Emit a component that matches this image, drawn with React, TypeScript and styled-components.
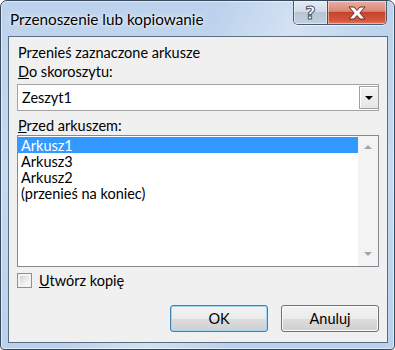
import React from 'react';
import styled, { createGlobalStyle } from 'styled-components';

const GlobalStyle = createGlobalStyle`
  html, body {
    margin: 0;
    padding: 0;
    background: #ffffff;
  }
  body {
    font-family: Lato, "Noto Sans", "Liberation Sans", sans-serif;
    font-size: 14.5px;
    color: #000;
  }
`;

const Window = styled.div`
  width: 395px;
  height: 350px;
  box-sizing: border-box;
  border: 1px solid #3a4a5d;
  border-radius: 7px 7px 4px 4px;
  padding: 0 6px 6px 7px;
  display: flex;
  flex-direction: column;
  background:
    linear-gradient(115deg, rgba(255, 255, 255, 0) 40%, rgba(255, 255, 255, 0.35) 55%, rgba(255, 255, 255, 0) 70%),
    linear-gradient(180deg, #bcd2ec 0%, #c6daf0 50%, #b9d1ec 100%);
  box-shadow: inset 0 0 0 1px rgba(255, 255, 255, 0.55);
  overflow: hidden;
`;

const TitleBar = styled.div`
  height: 35px;
  flex: none;
  display: flex;
  justify-content: space-between;
  align-items: flex-start;
`;

const Title = styled.div`
  padding: 8px 0 0 2px;
  font-size: 15.3px;
  line-height: 20px;
  color: #000;
  text-shadow: 0 0 6px rgba(255, 255, 255, 0.9), 0 0 2px rgba(255, 255, 255, 0.9);
`;

const CaptionButtons = styled.div`
  display: flex;
  margin-right: 1px;
  height: 23px;
  border: 1px solid #4a5a6e;
  border-top: none;
  border-radius: 0 0 5px 5px;
  overflow: hidden;
  box-shadow: 0 1px 0 rgba(255, 255, 255, 0.6);
`;

const CaptionButton = styled.div<{ $kind: 'help' | 'close' }>`
  width: ${p => (p.$kind === 'help' ? '33px' : '58px')};
  height: 100%;
  display: flex;
  align-items: center;
  justify-content: center;
  box-shadow: inset 0 0 0 1px rgba(255, 255, 255, 0.45);
  border-left: ${p => (p.$kind === 'close' ? '1px solid #5a4a50' : 'none')};
  background: ${p =>
    p.$kind === 'help'
      ? 'linear-gradient(180deg, #e3eaf3 0%, #d2dce8 45%, #b7c5d6 50%, #c4d0de 100%)'
      : 'linear-gradient(180deg, #eab0a3 0%, #d98672 45%, #c4432c 50%, #d5563d 85%, #e07a5f 100%)'};
`;

const HelpGlyph = styled.span`
  font-family: "DejaVu Sans", sans-serif;
  font-weight: bold;
  font-size: 18px;
  line-height: 18px;
  color: #ffffff;
  -webkit-text-stroke: 1px #4d5a6a;
`;

const Client = styled.div`
  flex: 1;
  border: 1px solid #5c6d80;
  background: #f0f0f0;
  display: flex;
  flex-direction: column;
  padding: 6px 8px 10px 8px;
`;

const Caption = styled.div<{ $gap?: number }>`
  height: 19px;
  line-height: 20px;
  padding-left: 1px;
  margin-top: ${p => p.$gap ?? 0}px;
  white-space: nowrap;
`;

const Combo = styled.div`
  margin-top: 3px;
  height: 27px;
  box-sizing: border-box;
  border: 1px solid #a3a3a3;
  background: #ffffff;
  display: flex;
  align-items: stretch;
  padding: 1px 0;
`;

const ComboText = styled.div`
  flex: 1;
  padding-left: 4px;
  line-height: 24px;
`;

const ComboButton = styled.div`
  width: 20px;
  box-sizing: border-box;
  border: 1px solid #a0a0a0;
  margin-right: -1px;
  background: linear-gradient(180deg, #f4f4f4 0%, #e6e6e6 100%);
  box-shadow: inset 1px 1px 0 #ffffff;
  display: flex;
  align-items: center;
  justify-content: center;
`;

const ListBox = styled.div`
  height: 132px;
  box-sizing: border-box;
  border: 1px solid #828790;
  background: #ffffff;
  display: flex;
`;

const Items = styled.div`
  flex: 1;
  padding-top: 1px;
`;

const Row = styled.div<{ $selected?: boolean }>`
  height: 15px;
  padding-top: 1px;
  line-height: 16px;
  padding-left: 3px;
  white-space: nowrap;
  background: ${p => (p.$selected ? '#3399ff' : 'transparent')};
  color: ${p => (p.$selected ? '#ffffff' : '#000000')};
`;

const ScrollBar = styled.div`
  width: 20px;
  background: #f3f3f3;
  display: flex;
  flex-direction: column;
  justify-content: space-between;
  align-items: center;
  padding: 9px 0 10px;
`;

const Arrow = styled.div<{ $down?: boolean }>`
  width: 0;
  height: 0;
  border-left: 4px solid transparent;
  border-right: 4px solid transparent;
  ${p => (p.$down ? 'border-top: 4px solid #a3a3a3;' : 'border-bottom: 4px solid #a3a3a3;')}
`;

const ComboArrow = styled.div`
  width: 0;
  height: 0;
  border-left: 4px solid transparent;
  border-right: 4px solid transparent;
  border-top: 4px solid #000000;
  margin-top: 1px;
`;

const CheckRow = styled.label`
  margin-top: 6px;
  height: 15px;
  display: flex;
  align-items: center;
  gap: 7px;
`;

const CheckBox = styled.span`
  width: 15px;
  height: 15px;
  box-sizing: border-box;
  border: 1px solid #8e8f8f;
  background: #f4f4f4;
  padding: 2px;
  display: block;
  &::after {
    content: '';
    display: block;
    width: 100%;
    height: 100%;
    background: linear-gradient(135deg, #cfd2d6 0%, #eeeeee 60%, #f6f6f6 100%);
  }
`;

const CheckLabel = styled.span`
  line-height: 18px;
  white-space: nowrap;
`;

const ButtonRow = styled.div`
  margin-top: auto;
  display: flex;
  justify-content: flex-end;
  gap: 13px;
`;

const Button = styled.button<{ $default?: boolean }>`
  width: 98px;
  height: 27px;
  box-sizing: border-box;
  font-family: inherit;
  font-size: 14.5px;
  color: #000;
  border-radius: 3px;
  border: 1px solid ${p => (p.$default ? '#3c7fb1' : '#707070')};
  box-shadow: inset 0 0 0 1px ${p => (p.$default ? '#a4d8f5' : '#fbfbfb')};
  background: linear-gradient(180deg, #f2f2f2 0%, #ebebeb 50%, #dddddd 51%, #cfcfcf 100%);
  padding: 0;
`;

const App: React.FC = () => {
  return (
    <>
      <GlobalStyle />
      <Window>
        <TitleBar>
          <Title>Przenoszenie lub kopiowanie</Title>
          <CaptionButtons>
            <CaptionButton $kind="help">
              <HelpGlyph>?</HelpGlyph>
            </CaptionButton>
            <CaptionButton $kind="close">
              <svg width="20" height="14" viewBox="0 0 20 14">
                <path
                  d="M2 1 H7 L10 4.5 L13 1 H18 L12.8 7 L18 13 H13 L10 9.5 L7 13 H2 L7.2 7 Z"
                  fill="#ffffff"
                  stroke="#6b2a20"
                  strokeWidth="1"
                  strokeLinejoin="round"
                />
              </svg>
            </CaptionButton>
          </CaptionButtons>
        </TitleBar>
        <Client>
          <Caption>Przenieś zaznaczone arkusze</Caption>
          <Caption>
            <u>D</u>o skoroszytu:
          </Caption>
          <Combo>
            <ComboText>Zeszyt1</ComboText>
            <ComboButton>
              <ComboArrow />
            </ComboButton>
          </Combo>
          <Caption $gap={5}>
            <u>P</u>rzed arkuszem:
          </Caption>
          <ListBox>
            <Items>
              <Row $selected>Arkusz1</Row>
              <Row>Arkusz3</Row>
              <Row>Arkusz2</Row>
              <Row>(przenieś na koniec)</Row>
            </Items>
            <ScrollBar>
              <Arrow />
              <Arrow $down />
            </ScrollBar>
          </ListBox>
          <CheckRow>
            <CheckBox />
            <CheckLabel>
              <u>U</u>twórz kopię
            </CheckLabel>
          </CheckRow>
          <ButtonRow>
            <Button $default>OK</Button>
            <Button>Anuluj</Button>
          </ButtonRow>
        </Client>
      </Window>
    </>
  );
};

export default App;
